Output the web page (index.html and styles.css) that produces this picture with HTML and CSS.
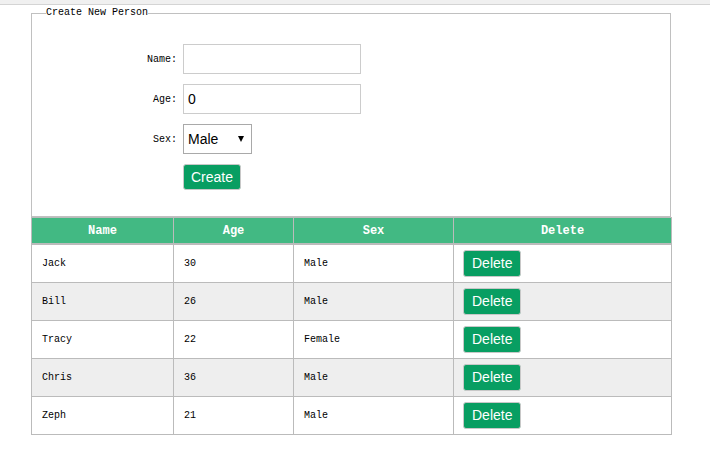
FILE: index.html
```html
<!DOCTYPE html>
<html lang="en">
<head>
<meta charset="utf-8">
<title>Create New Person</title>
<link rel="stylesheet" href="styles.css">
</head>
<body>
<div class="topbar"></div>
<div class="page">
  <fieldset class="create-form">
    <legend class="legend">Create New Person</legend>
    <div class="form-grid">
      <label class="label" for="name">Name:</label>
      <input id="name" class="text-input" type="text">
      <label class="label" for="age">Age:</label>
      <input id="age" class="text-input" type="text" value="0">
      <label class="label" for="sex">Sex:</label>
      <span class="select-wrap"><select id="sex" class="select"><option>Male</option><option>Female</option></select></span>
      <span></span>
      <button class="btn" type="button">Create</button>
    </div>
  </fieldset>
  <table class="people">
    <colgroup>
      <col class="c-name"><col class="c-age"><col class="c-sex"><col class="c-del">
    </colgroup>
    <thead>
      <tr><th>Name</th><th>Age</th><th>Sex</th><th>Delete</th></tr>
    </thead>
    <tbody>
      <tr><td>Jack</td><td>30</td><td>Male</td><td><button class="btn" type="button">Delete</button></td></tr>
      <tr><td>Bill</td><td>26</td><td>Male</td><td><button class="btn" type="button">Delete</button></td></tr>
      <tr><td>Tracy</td><td>22</td><td>Female</td><td><button class="btn" type="button">Delete</button></td></tr>
      <tr><td>Chris</td><td>36</td><td>Male</td><td><button class="btn" type="button">Delete</button></td></tr>
      <tr><td>Zeph</td><td>21</td><td>Male</td><td><button class="btn" type="button">Delete</button></td></tr>
    </tbody>
  </table>
</div>
</body>
</html>
```

FILE: styles.css
```css
html, body {
  margin: 0;
  padding: 0;
  background: #fff;
}
body {
  font-family: "Liberation Mono", "DejaVu Sans Mono", monospace;
  font-size: 10px;
  color: #000;
}
.topbar {
  height: 4px;
  background: #f0f0f0;
  border-bottom: 1px solid #d4d4d4;
}
.page {
  margin-left: 31px;
  width: 640px;
}
.create-form {
  box-sizing: border-box;
  width: 640px;
  margin: 2px 0 0 0;
  padding: 0;
  border: 1px solid #c0c0c0;
  min-inline-size: 0;
}
.legend {
  margin-left: 14px;
  padding: 0;
  font-size: 10px;
  line-height: 12px;
  color: #000;
}
.form-grid {
  display: grid;
  grid-template-columns: 145px auto;
  justify-content: start;
  column-gap: 6px;
  row-gap: 10px;
  align-items: center;
  padding: 25px 0 26px 0;
}
.label {
  text-align: right;
  font-size: 10px;
}
.text-input {
  box-sizing: border-box;
  width: 178px;
  height: 30px;
  margin: 0;
  padding: 0 4px;
  border: 1px solid #cccccc;
  font-family: "Liberation Sans", Arial, sans-serif;
  font-size: 14px;
  color: #000;
  outline: none;
}
.select-wrap {
  position: relative;
  justify-self: start;
  display: inline-block;
  width: 69px;
  height: 30px;
}
.select {
  box-sizing: border-box;
  width: 69px;
  height: 30px;
  margin: 0;
  padding: 0 0 0 4px;
  border: 1px solid #a9a9a9;
  border-radius: 0;
  background: #fff;
  appearance: none;
  -webkit-appearance: none;
  font-family: "Liberation Sans", Arial, sans-serif;
  font-size: 14px;
  color: #000;
}
.select-wrap::after {
  content: "";
  position: absolute;
  right: 8px;
  top: 12px;
  width: 0;
  height: 0;
  border-left: 3.5px solid transparent;
  border-right: 3.5px solid transparent;
  border-top: 6px solid #000;
  pointer-events: none;
}
.btn {
  justify-self: start;
  box-sizing: border-box;
  height: 26px;
  margin: 0;
  padding: 0 7px;
  border: 1px solid #c8c8c8;
  border-radius: 3px;
  background: #089e62;
  color: #fff;
  font-family: "Liberation Sans", Arial, sans-serif;
  font-size: 14px;
  line-height: 24px;
  cursor: pointer;
}
.people {
  width: 640px;
  border-collapse: collapse;
  table-layout: fixed;
  border: 1px solid #bbbbbb;
}
.c-name { width: 142px; }
.c-age { width: 120px; }
.c-sex { width: 160px; }
.c-del { width: 218px; }
.people th {
  height: 25px;
  padding: 0;
  background: #42b983;
  color: #fff;
  font-size: 12px;
  font-weight: bold;
  text-align: center;
  border: 1px solid #bbbbbb;
  border-bottom-width: 2px;
}
.people td {
  height: 37px;
  padding: 0 0 0 10px;
  border: 1px solid #bbbbbb;
  font-size: 10px;
  text-align: left;
  vertical-align: middle;
}
.people tbody tr:nth-child(even) td {
  background: #eeeeee;
}
.people td .btn {
  height: 27px;
  margin-left: -1px;
  padding: 0 8px;
  line-height: 25px;
}
```
